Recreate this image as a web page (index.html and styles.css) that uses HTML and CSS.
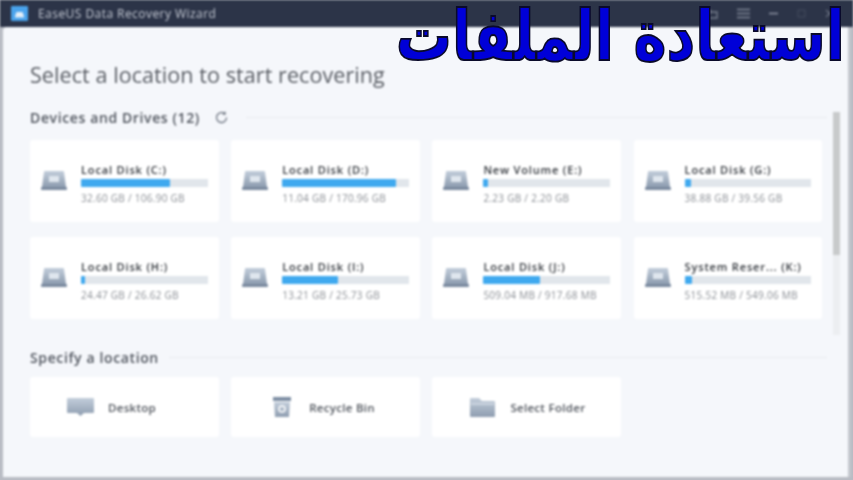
FILE: index.html
```html
<!DOCTYPE html>
<html lang="en">
<head>
    <meta charset="UTF-8">
    <meta name="viewport" content="width=device-width, initial-scale=1.0">
    <title>EaseUS Data Recovery Wizard</title>
    <link rel="stylesheet" href="styles.css">
</head>

<body>
    <div class="window">
        <div class="titlebar">
            <svg class="app-icon" width="17" height="15" viewBox="0 0 17 15">
                <rect width="17" height="15" rx="1" fill="#4aa3ec"/>
                <path d="M4 10l1.500-4h6L13 10v1.500H4z" fill="#e3eef8"/>
            </svg>
            <span class="app-name">EaseUS Data Recovery Wizard</span>
            <div class="win-btns">
                <svg width="17" height="10" viewBox="0 0 17 10" fill="none" stroke="#747b8b" stroke-width="1.400"><path d="M1 3h15v6H1zM8.500 1v5M6.500 3l2-2 2 2"/></svg>
                <svg width="13" height="11" viewBox="0 0 13 11" fill="none" stroke="#7f8696" stroke-width="1.600"><path d="M0 1.500h13M0 5.500h13M0 9.500h13"/></svg>
                <svg width="9" height="3" viewBox="0 0 9 3" fill="none" stroke="#8a90a0" stroke-width="1.600"><path d="M0 1.500h9"/></svg>
                <svg width="9" height="9" viewBox="0 0 9 9" fill="none" stroke="#454c5e" stroke-width="1"><path d="M1 1h7v7H1z"/></svg>
                <svg width="9" height="9" viewBox="0 0 9 9" fill="none" stroke="#6a7182" stroke-width="1.200"><path d="M1 1l7 7M8 1l-7 7"/></svg>
            </div>
        </div>

        <div class="body">
            <div class="content">
                <h1 class="page-title">Select a location to start recovering</h1>

                <div class="section-head">
                    <span>Devices and Drives (12)</span>
                    <svg class="refresh" width="15" height="13" viewBox="0 0 15 13" fill="none" stroke="#6d7480" stroke-width="1.300"><path d="M12.500 6.500a5 5 0 1 1-1.600-3.700M11 .8v2.400H8.600"/></svg>
                    <div class="rule"></div>
                </div>

                <div class="cards drives">
                    <div class="card drive">
                        <svg class="disk" viewBox="0 0 26 20"><use href="#hdd"/></svg>
                        <div class="info">
                            <div class="name">Local Disk (C:)</div>
                            <div class="bar"><div class="fill" style="width:70%"></div></div>
                            <div class="size">32.60 GB / 106.90 GB</div>
                        </div>
                    </div>
                    <div class="card drive">
                        <svg class="disk" viewBox="0 0 26 20"><use href="#hdd"/></svg>
                        <div class="info">
                            <div class="name">Local Disk (D:)</div>
                            <div class="bar"><div class="fill" style="width:90%"></div></div>
                            <div class="size">11.04 GB / 170.96 GB</div>
                        </div>
                    </div>
                    <div class="card drive">
                        <svg class="disk" viewBox="0 0 26 20"><use href="#hdd"/></svg>
                        <div class="info">
                            <div class="name">New Volume (E:)</div>
                            <div class="bar"><div class="fill" style="width:4%"></div></div>
                            <div class="size">2.23 GB / 2.20 GB</div>
                        </div>
                    </div>
                    <div class="card drive">
                        <svg class="disk" viewBox="0 0 26 20"><use href="#hdd"/></svg>
                        <div class="info">
                            <div class="name">Local Disk (G:)</div>
                            <div class="bar"><div class="fill" style="width:5%"></div></div>
                            <div class="size">38.88 GB / 39.56 GB</div>
                        </div>
                    </div>
                    <div class="card drive">
                        <svg class="disk" viewBox="0 0 26 20"><use href="#hdd"/></svg>
                        <div class="info">
                            <div class="name">Local Disk (H:)</div>
                            <div class="bar"><div class="fill" style="width:3%"></div></div>
                            <div class="size">24.47 GB / 26.62 GB</div>
                        </div>
                    </div>
                    <div class="card drive">
                        <svg class="disk" viewBox="0 0 26 20"><use href="#hdd"/></svg>
                        <div class="info">
                            <div class="name">Local Disk (I:)</div>
                            <div class="bar"><div class="fill" style="width:44%"></div></div>
                            <div class="size">13.21 GB / 25.73 GB</div>
                        </div>
                    </div>
                    <div class="card drive">
                        <svg class="disk" viewBox="0 0 26 20"><use href="#hdd"/></svg>
                        <div class="info">
                            <div class="name">Local Disk (J:)</div>
                            <div class="bar"><div class="fill" style="width:45%"></div></div>
                            <div class="size">509.04 MB / 917.68 MB</div>
                        </div>
                    </div>
                    <div class="card drive">
                        <svg class="disk" viewBox="0 0 26 20"><use href="#hdd"/></svg>
                        <div class="info">
                            <div class="name">System Reser... (K:)</div>
                            <div class="bar"><div class="fill" style="width:6%"></div></div>
                            <div class="size">515.52 MB / 549.06 MB</div>
                        </div>
                    </div>
                </div>

                <div class="section-head specify">
                    <span>Specify a location</span>
                    <div class="rule"></div>
                </div>

                <div class="cards places">
                    <div class="card place">
                        <div class="place-icon">
                            <svg width="27" height="19" viewBox="0 0 27 19"><path d="M0 1q0-1 1-1h25q1 0 1 1v13q0 1-1 1h-9l-3.500 3L10 15H1q-1 0-1-1z" fill="url(#metal)"/></svg>
                        </div>
                        <span>Desktop</span>
                    </div>
                    <div class="card place">
                        <div class="place-icon">
                            <svg width="20" height="20" viewBox="0 0 20 20"><path d="M1 0h18v4H1z" fill="#7d8ea3"/><path d="M2 5h16l-1 15H3z" fill="url(#metal)"/><circle cx="10" cy="12" r="3" fill="none" stroke="#fff" stroke-width="1.500"/></svg>
                        </div>
                        <span>Recycle Bin</span>
                    </div>
                    <div class="card place">
                        <div class="place-icon">
                            <svg width="25" height="19" viewBox="0 0 25 19"><path d="M0 1q0-1 1-1h8l3 3h12q1 0 1 1v14q0 1-1 1H1q-1 0-1-1z" fill="url(#metal)"/><path d="M1 6h23" stroke="#e4eaf1"/></svg>
                        </div>
                        <span>Select Folder</span>
                    </div>
                </div>
            </div>

            <div class="scrollbar"><div class="thumb"></div></div>
        </div>
    </div>

    <div class="overlay-title" lang="ar" dir="rtl">استعادة الملفات</div>

    <svg class="defs" width="0" height="0">
        <defs>
            <linearGradient id="metal" x1="0" y1="0" x2="0" y2="1">
                <stop offset="0" stop-color="#c3cedb"/>
                <stop offset="1" stop-color="#8e9db0"/>
            </linearGradient>
            <symbol id="hdd" viewBox="0 0 26 20">
                <path d="M3 1q0-1 1-1h18q1 0 1 1l2 15H1z" fill="url(#metal)"/>
                <rect x="0" y="16" width="26" height="3" rx="1" fill="#7a8a9f"/>
                <path d="M8 5h10v6H8z" fill="#dfe6ee"/>
            </symbol>
        </defs>
    </svg>
</body>
</html>
```

FILE: styles.css
```css
html, body {
    margin: 0;
    padding: 0;
}
body {
    width: 853px;
    height: 480px;
    overflow: hidden;
    position: relative;
    background: #b9bcc4;
    font-family: "Open Sans", "Noto Sans", sans-serif;
}
.window {
    height: 477px;
    display: flex;
    flex-direction: column;
    filter: blur(0.8px);
}
.titlebar {
    height: 27px;
    flex: none;
    background: #2c3448;
    display: flex;
    align-items: center;
    padding: 0 19px 0 11px;
    color: #c4c9d3;
    font-size: 12px;
    letter-spacing: 0.450px;
}
.app-name {
    margin-left: 10px;
}
.win-btns {
    margin-left: auto;
    display: flex;
    align-items: center;
    gap: 19px;
}
.body {
    flex: 1;
    margin: 0 2px 0 3px;
    background: #f5f7fb;
    border-top-left-radius: 4px;
    border-right: 3px solid #c3c6cd;
    display: flex;
}
.content {
    flex: 1;
    padding: 0 0 0 27px;
}
.page-title {
    margin: 35px 0 0;
    font-size: 21.500px;
    letter-spacing: 0.080px;
    line-height: 26px;
    font-weight: 400;
    color: #585c63;
}
.section-head {
    display: flex;
    align-items: center;
    margin-top: 20px;
    height: 18px;
    font-size: 14px;
    letter-spacing: 0.620px;
    font-weight: 600;
    color: #50555e;
}
.section-head.specify {
    margin-top: 29px;
}
.refresh {
    margin-left: 14px;
}
.rule {
    flex: 1;
    height: 1px;
    margin-left: 17px;
    background: #e8eaef;
}
.specify .rule {
    margin-left: 10px;
}
.cards {
    display: grid;
    grid-template-columns: repeat(4, 188.500px);
    column-gap: 12.700px;
}
.drives {
    margin-top: 14px;
    row-gap: 15px;
    grid-auto-rows: 82px;
}
.places {
    margin-top: 11px;
    grid-auto-rows: 60px;
}
.card {
    background: #fff;
    border-radius: 3px;
    display: flex;
}
.drive {
    padding: 0 11px 0 11px;
    align-items: flex-start;
}
.disk {
    width: 26px;
    height: 20px;
    margin-top: 31px;
    flex: none;
}
.info {
    flex: 1;
    margin-left: 14px;
    padding-top: 23px;
    min-width: 0;
}
.name {
    font-size: 11px;
    letter-spacing: 0.850px;
    line-height: 14px;
    font-weight: 600;
    color: #33373d;
    white-space: nowrap;
}
.bar {
    height: 8px;
    margin-top: 2px;
    background: #e1e6eb;
}
.fill {
    height: 100%;
    background: #3fa9ef;
    border-radius: 1px;
}
.size {
    margin-top: 5px;
    font-size: 10px;
    letter-spacing: 0.280px;
    line-height: 12px;
    color: #8b8f95;
    white-space: nowrap;
}
.place {
    align-items: center;
    padding-left: 37px;
    gap: 14px;
    font-size: 11.500px;
    letter-spacing: 0.300px;
    font-weight: 600;
    color: #50555d;
}
.place-icon {
    width: 27px;
    display: flex;
    justify-content: center;
}
.scrollbar {
    width: 7px;
    flex: none;
    margin: 85px 8px 0 6px;
    height: 223px;
    background: #eceef1;
}
.thumb {
    height: 143px;
    background: #c8cacb;
}
/* taller than the font draws it, so the letters are stretched from the baseline */
.overlay-title {
    position: absolute;
    top: 13px;
    right: 8px;
    font-family: "DejaVu Sans", sans-serif;
    font-size: 56px;
    font-weight: 700;
    line-height: 56px;
    color: #0000d8;
    -webkit-text-stroke: 1.500px #0a0a2a;
    white-space: nowrap;
    transform: scaleY(1.240);
    transform-origin: 50% 47px;
}
.defs {
    position: absolute;
}
```
